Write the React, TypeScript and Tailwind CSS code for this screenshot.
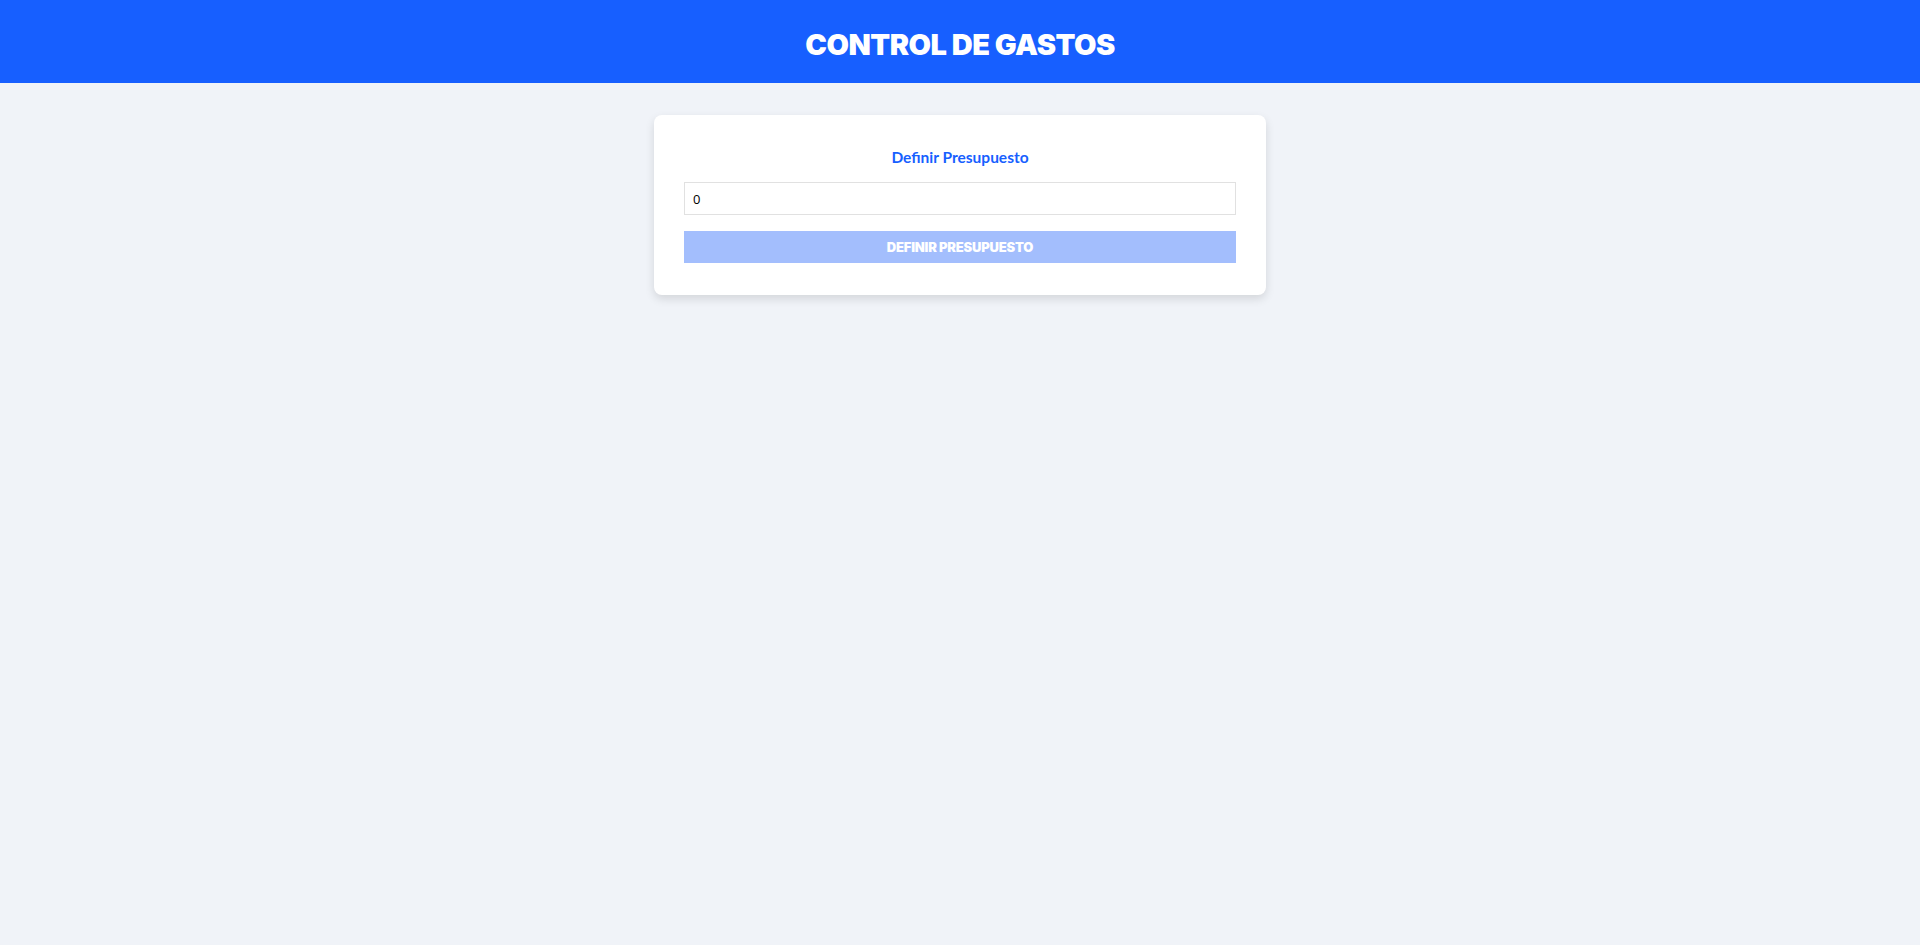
export default function App() {
  return (
    <div className="min-h-[945px] bg-[#f0f3f8] font-['Lato',sans-serif]">
      <header className="flex h-[83px] items-center justify-center bg-[#175fff] pt-[5px]">
        <h1 className="font-['Inter',sans-serif] text-[29px] font-black uppercase leading-none tracking-[-0.5px] text-white">
          Control de Gastos
        </h1>
      </header>

      <main className="flex justify-center pt-8">
        <form
          onSubmit={(e) => e.preventDefault()}
          className="w-[612px] rounded-lg bg-white px-[30px] pb-8 pt-[31px] shadow-[0_4px_10px_rgba(0,0,0,0.12)]"
        >
          <label className="block text-center text-[15.5px] font-bold text-[#175fff]">
            Definir Presupuesto
          </label>
          <input
            type="number"
            defaultValue={0}
            className="mt-[13px] block h-[33px] w-full border border-[#e1e1e1] px-2 font-['Open_Sans',sans-serif] text-[13px] font-normal text-black outline-none"
          />
          <button
            type="submit"
            disabled
            className="mt-4 block h-[32px] w-full bg-[#a3befd] font-['Inter',sans-serif] text-[13px] font-black uppercase tracking-[-0.2px] text-white"
          >
            Definir Presupuesto
          </button>
        </form>
      </main>
    </div>
  );
}
